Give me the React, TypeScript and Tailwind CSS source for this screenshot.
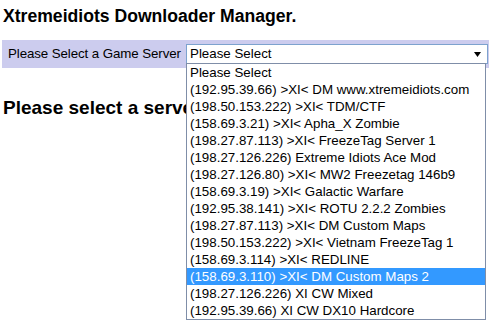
const servers = [
  "Please Select",
  "(192.95.39.66) >XI< DM www.xtremeidiots.com",
  "(198.50.153.222) >XI< TDM/CTF",
  "(158.69.3.21) >XI< Apha_X Zombie",
  "(198.27.87.113) >XI< FreezeTag Server 1",
  "(198.27.126.226) Extreme Idiots Ace Mod",
  "(198.27.126.80) >XI< MW2 Freezetag 146b9",
  "(158.69.3.19) >XI< Galactic Warfare",
  "(192.95.38.141) >XI< ROTU 2.2.2 Zombies",
  "(198.27.87.113) >XI< DM Custom Maps",
  "(198.50.153.222) >XI< Vietnam FreezeTag 1",
  "(158.69.3.114) >XI< REDLINE",
  "(158.69.3.110) >XI< DM Custom Maps 2",
  "(198.27.126.226) XI CW Mixed",
  "(192.95.39.66) XI CW DX10 Hardcore",
];

const highlighted = 12;

export default function App() {
  return (
    <div className="min-h-[327px] w-[492px] overflow-hidden bg-white font-['Liberation_Sans',Arial,sans-serif] text-black">
      <h1 className="pl-[3px] pt-[6px] text-[17.6px] font-bold leading-[20px]">
        Xtremeidiots Downloader Manager.
      </h1>

      {/* server picker bar */}
      <div className="ml-[2px] mt-[14px] flex h-[28px] w-[487px] items-center bg-[#ccccee] pl-[6px]">
        <span className="w-[178px] shrink-0 whitespace-nowrap text-[13.33px] leading-[16px] tracking-[-0.1px]">
          Please Select a Game Server
        </span>
        <div className="relative">
          <div className="flex h-[20px] w-[302px] items-center justify-between border border-[#7da2ce] bg-white pl-[3px] pr-[6px] text-[13.33px] leading-[16px]">
            <span>Please Select</span>
            <svg width="7" height="5" viewBox="0 0 7 5">
              <path d="M0 0H7L3.5 5Z" fill="#000" />
            </svg>
          </div>

          {/* open dropdown list */}
          <ul className="absolute left-0 top-[19px] z-10 w-[300px] border border-[#7f8ea8] bg-white text-[13.33px]">
            {servers.map((s, i) => (
              <li
                key={i}
                className={
                  i === highlighted
                    ? "h-[17px] whitespace-nowrap bg-[#3399ff] pl-[3px] leading-[17px] text-white"
                    : "h-[17px] whitespace-nowrap pl-[3px] leading-[17px]"
                }
              >
                {s}
              </li>
            ))}
          </ul>
        </div>
      </div>

      <h2 className="w-[186px] overflow-hidden whitespace-nowrap pl-[3px] pt-[29px] text-[19px] font-bold leading-[22px]">
        Please select a server
      </h2>
    </div>
  );
}
